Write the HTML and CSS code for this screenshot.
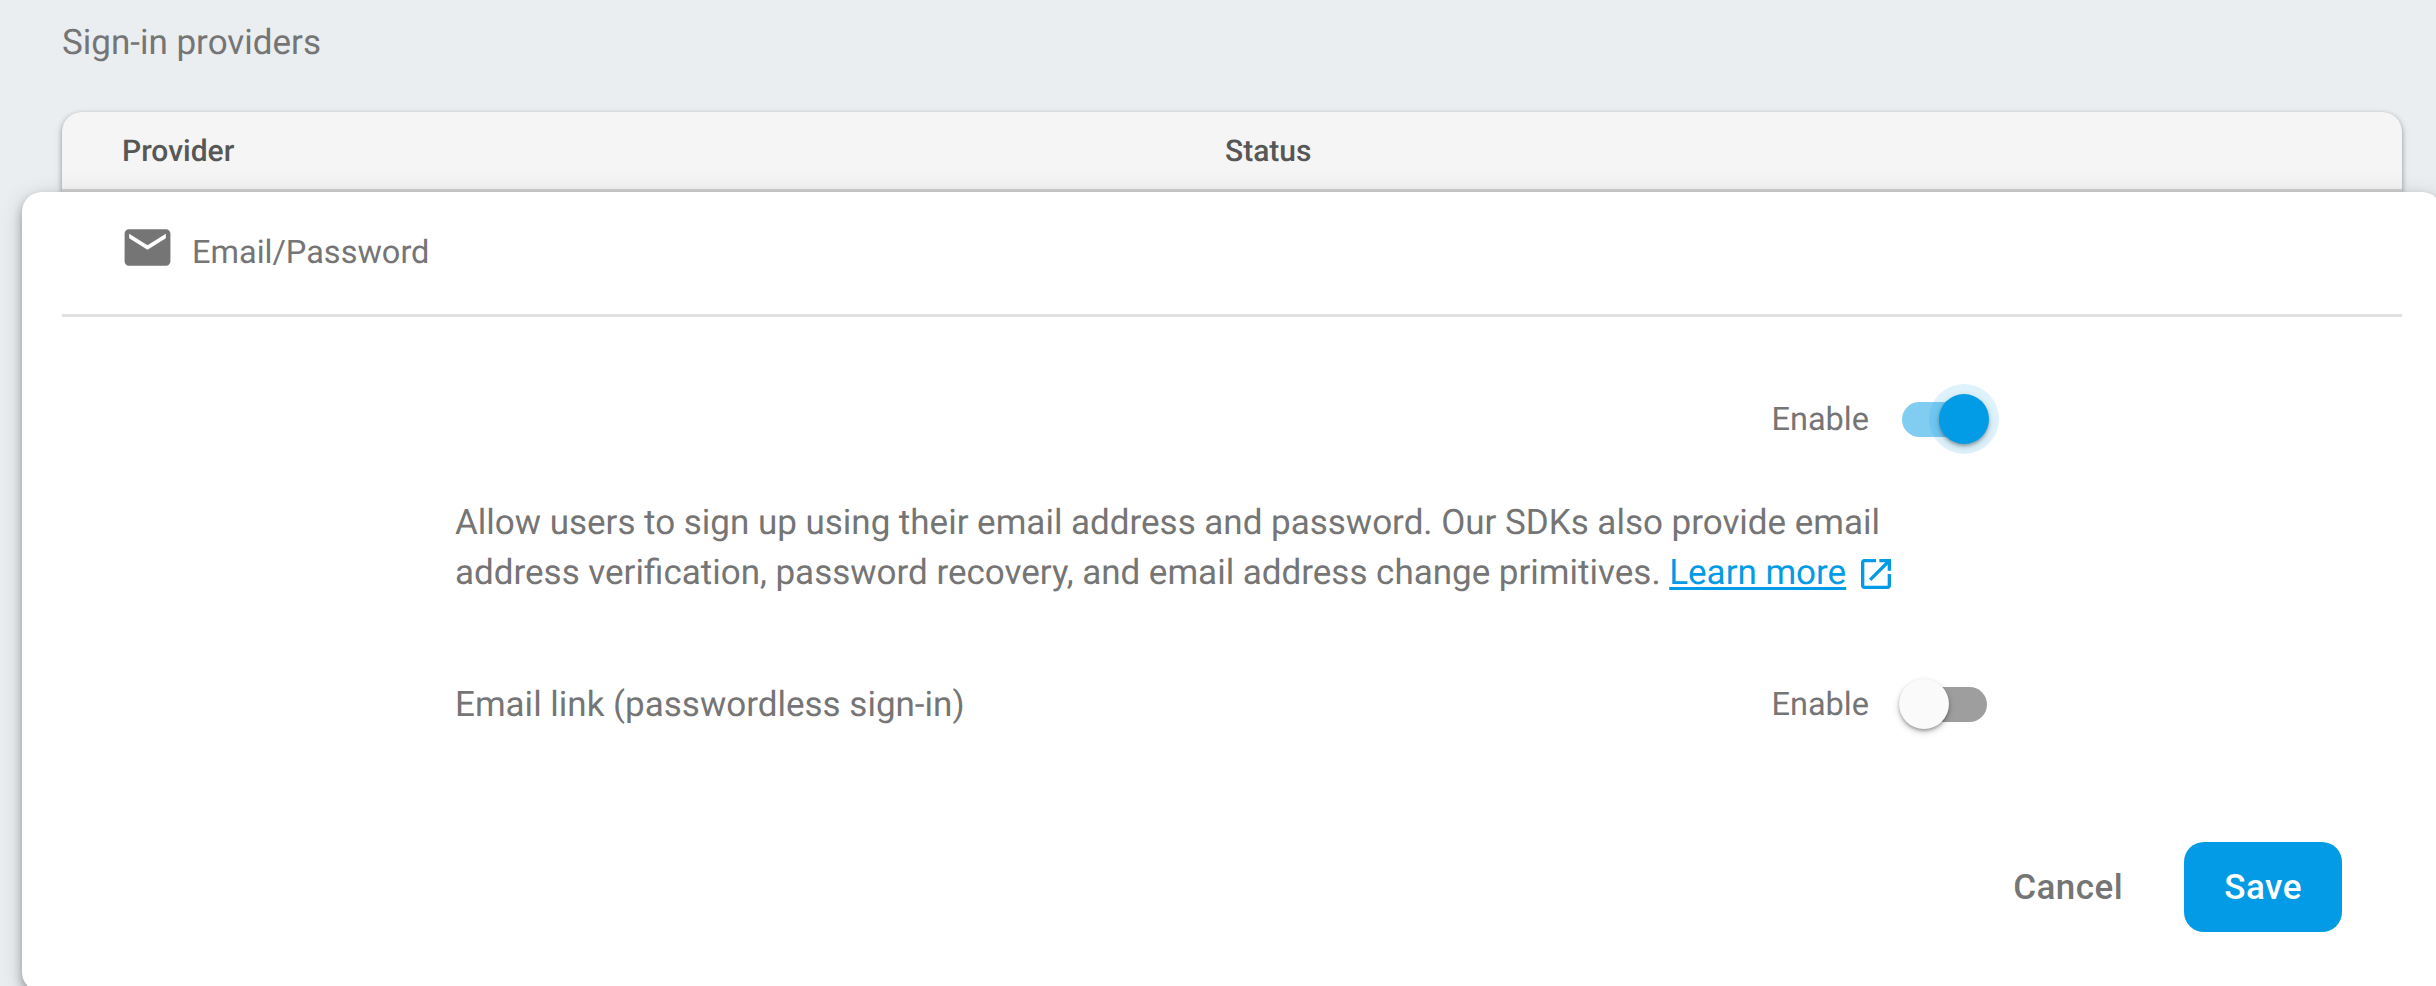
FILE: index.html
```html
<!DOCTYPE html>
<html lang="en">
<head>
<meta charset="utf-8">
<title>Sign-in providers</title>
<link rel="stylesheet" href="styles.css">
</head>
<body>
<main class="page">
  <h1 class="page-title">Sign-in providers</h1>
  <div class="table-head">
    <span class="col-provider">Provider</span>
    <span class="col-status">Status</span>
  </div>
  <section class="card">
    <header class="card-head">
      <svg class="mail" viewBox="0 0 24 24"><path d="M20 4H4c-1.1 0-1.99.9-1.99 2L2 18c0 1.1.9 2 2 2h16c1.1 0 2-.9 2-2V6c0-1.1-.9-2-2-2zm0 4l-8 5-8-5V6l8 5 8-5v2z"/></svg>
      <span class="card-name">Email/Password</span>
    </header>
    <div class="settings">
      <div class="row row-main">
        <label class="toggle"><span class="toggle-text">Enable</span><span class="switch on"><span class="thumb"></span></span></label>
      </div>
      <p class="description">Allow users to sign up using their email address and password. Our SDKs also provide email<br>address verification, password recovery, and email address change primitives. <a class="link" href="#">Learn more</a><svg class="external" viewBox="0 0 24 24"><path d="M19 19H5V5h7V3H5c-1.11 0-2 .9-2 2v14c0 1.1.89 2 2 2h14c1.1 0 2-.9 2-2v-7h-2v7zM14 3v2h3.59l-9.83 9.83 1.41 1.41L19 6.41V10h2V3h-7z"/></svg></p>
      <div class="row row-link">
        <span class="row-name">Email link (passwordless sign-in)</span>
        <label class="toggle"><span class="toggle-text">Enable</span><span class="switch"><span class="thumb"></span></span></label>
      </div>
    </div>
    <footer class="actions">
      <button class="button">Cancel</button>
      <button class="button primary">Save</button>
    </footer>
  </section>
</main>
</body>
</html>
```
FILE: styles.css
```css
* { box-sizing: border-box; }

body {
  margin: 0;
  height: 986px;
  overflow: hidden;
  background: #eaeef1;
  color: #757575;
  font-family: Roboto, sans-serif;
  font-size: 35px;
  text-rendering: geometricPrecision;
}

.page { width: 2464px; padding: 18px 22px 0; }

.page-title {
  margin: 0 0 44px 40px;
  font-size: 35px;
  font-weight: 400;
  line-height: 50px;
}

.table-head {
  display: grid;
  grid-template-columns: 1103px 1fr;
  height: 80px;
  margin: 0 40px;
  padding-left: 60px;
  border-bottom: 3px solid #d4d4d4;
  border-radius: 20px 20px 0 0;
  background: #f5f5f5;
  box-shadow: 0 2px 5px rgba(0, 0, 0, .3), 0 3px 10px rgba(0, 0, 0, .12);
  color: #575757;
  font-size: 30px;
  font-weight: 500;
  line-height: 80px;
}

.card {
  position: relative;
  height: 800px;
  border-radius: 20px;
  background: #fff;
  box-shadow: 0 5px 10px rgba(0, 0, 0, .3), 0 5px 25px rgba(0, 0, 0, .16);
}

.card-head {
  display: flex;
  align-items: center;
  gap: 17px;
  height: 125px;
  margin: 0 40px;
  padding: 0 0 12px 58px;
  border-bottom: 3px solid #e1e1e1;
}

.mail { width: 55px; height: 55px; fill: #757575; }
.card-name { padding-top: 9px; font-size: 32.5px; line-height: 40px; }

.settings { width: 1535px; margin-left: 433px; }

.row { display: flex; align-items: center; justify-content: space-between; height: 50px; }
.row-main { justify-content: flex-end; margin-top: 77px; }
.row-link { margin-top: 81px; }

.toggle { display: flex; align-items: center; gap: 30px; }
.toggle-text { font-size: 32.5px; }

.switch {
  display: flex;
  align-items: center;
  width: 90px;
  height: 50px;
  position: relative;
  margin-right: 1px;
}
.switch::before {
  content: "";
  position: absolute;
  left: 3px;
  top: 8px;
  width: 85px;
  height: 35px;
  border-radius: 18px;
  background: #9e9e9e;
}
.thumb {
  position: relative;
  width: 50px;
  height: 50px;
  border-radius: 50%;
  background: #fafafa;
  box-shadow: 0 2px 3px rgba(0, 0, 0, .25), 0 3px 7px rgba(0, 0, 0, .2);
}
.switch.on { justify-content: flex-end; }
.switch.on::before { background: #81cdf2; }
.switch.on .thumb { background: #039be5; }
.switch.on::after {
  content: "";
  position: absolute;
  right: -10px;
  top: -10px;
  width: 70px;
  height: 70px;
  border-radius: 50%;
  background: rgba(3, 155, 229, .13);
}

.description { margin: 54px 0 0; line-height: 50px; white-space: nowrap; word-spacing: -.1px; }
.link { color: #039be5; text-decoration-thickness: 3px; text-underline-offset: 3px; text-decoration-skip-ink: none; }
.external { width: 40px; height: 40px; margin-left: 10px; vertical-align: -10px; fill: #039be5; }

.actions { display: flex; justify-content: flex-end; gap: 21px; margin: 113px 100px 0 0; }
.button {
  height: 90px;
  padding: 0 40px;
  border: 0;
  border-radius: 20px;
  background: none;
  color: #757575;
  font: 500 35px Roboto, sans-serif;
  letter-spacing: .5px;
}
.primary { background: #039be5; color: #fff; }
```
